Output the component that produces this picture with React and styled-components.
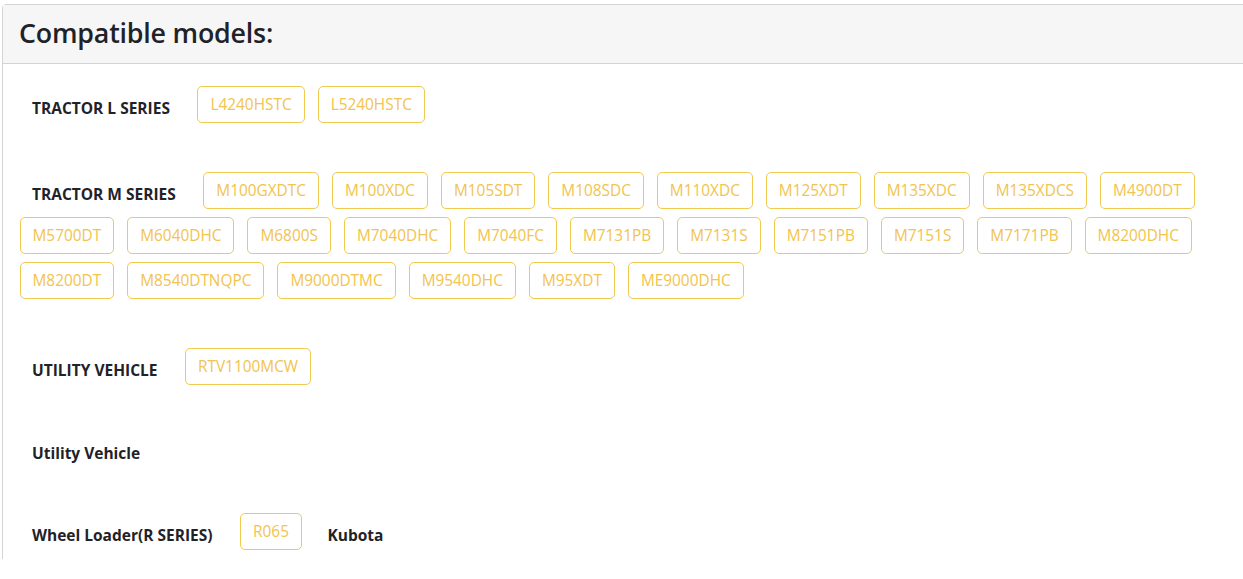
import React from "react"
import styled, { createGlobalStyle } from "styled-components"

const GlobalStyle = createGlobalStyle`
  html, body {
    margin: 0;
    padding: 0;
    background: #fff;
    overflow: hidden;
  }
  body {
    font-family: "Open Sans", "Noto Sans", Arial, sans-serif;
    color: #212529;
  }
`

// the shot is cut just under the last row, so the card runs past the frame
const Page = styled.div`
  height: 559px;
  overflow: hidden;
  padding: 4px 0 0 2px;
  box-sizing: border-box;
`

const Card = styled.div`
  width: 1262px;
  border: 1px solid #d4d4d4;
  border-radius: 4px;
  background: #fff;
`

const CardHeader = styled.div`
  height: 59px;
  display: flex;
  align-items: center;
  padding: 0 16px 4px;
  box-sizing: border-box;
  background: #f6f6f6;
  border-bottom: 1px solid #d4d4d4;

  h2 {
    margin: 0;
    font-size: 26.8px;
    font-weight: 600;
    letter-spacing: -0.2px;
    color: #1f2328;
  }
`

const CardBody = styled.div`
  padding: 18px 10px 40px;
  display: flex;
  flex-direction: column;
  gap: 41px;
`

const Group = styled.div`
  display: flex;
  flex-wrap: wrap;
  align-items: center;
  min-height: 38px;
`

const Label = styled.span`
  margin: 0 6px;
  padding: 7px 15px 0 13px;
  font-size: 15.5px;
  font-weight: 700;
  color: #1f2328;
  white-space: nowrap;
`

const Tag = styled.a`
  display: inline-block;
  margin: 4px 6.5px;
  padding: 8px 12px;
  line-height: 19px;
  font-size: 15.4px;
  color: #f2c34f;
  border: 1px solid #f0c94f;
  border-radius: 5px;
  text-decoration: none;
  white-space: nowrap;
`

const groups = [
  { label: "TRACTOR L SERIES", models: ["L4240HSTC", "L5240HSTC"] },
  {
    label: "TRACTOR M SERIES",
    models: [
      "M100GXDTC", "M100XDC", "M105SDT", "M108SDC", "M110XDC", "M125XDT",
      "M135XDC", "M135XDCS", "M4900DT", "M5700DT", "M6040DHC", "M6800S",
      "M7040DHC", "M7040FC", "M7131PB", "M7131S", "M7151PB", "M7151S",
      "M7171PB", "M8200DHC", "M8200DT", "M8540DTNQPC", "M9000DTMC",
      "M9540DHC", "M95XDT", "ME9000DHC",
    ],
  },
  { label: "UTILITY VEHICLE", models: ["RTV1100MCW"] },
  { label: "Utility Vehicle", models: [] },
  { label: "Wheel Loader(R SERIES)", models: ["R065"], after: "Kubota" },
]

export default function App() {
  return (
    <Page>
      <GlobalStyle />
      <Card>
        <CardHeader>
          <h2>Compatible models:</h2>
        </CardHeader>
        <CardBody>
          {groups.map((g) => (
            <Group key={g.label}>
              <Label>{g.label}</Label>
              {g.models.map((m) => (
                <Tag key={m} href="#">
                  {m}
                </Tag>
              ))}
              {g.after && <Label>{g.after}</Label>}
            </Group>
          ))}
        </CardBody>
      </Card>
    </Page>
  )
}
